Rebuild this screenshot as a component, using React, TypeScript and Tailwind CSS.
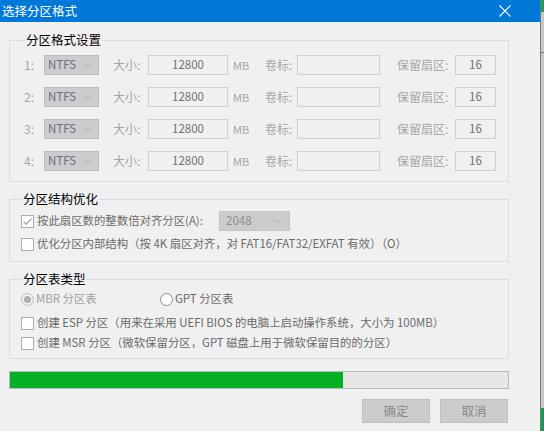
import React from "react";

const FONT = { fontFamily: '"Noto Sans CJK SC", "Noto Sans", sans-serif' };

function Chevron({ color = "#a8a8a8" }: { color?: string }) {
  return (
    <svg width="9" height="6" viewBox="0 0 9 6" className="shrink-0">
      <path d="M0.5 0.8 L4.5 4.8 L8.5 0.8" fill="none" stroke={color} strokeWidth="1" />
    </svg>
  );
}

function Combo({ value, w }: { value: string; w: string }) {
  return (
    <div className={`${w} h-[20px] bg-[#cccccc] border border-[#bdbdbd] flex items-center justify-between pl-[3px] pr-[6px] shrink-0`}>
      <span className="text-[11.5px] text-[#6e6e80] leading-none">{value}</span>
      <Chevron />
    </div>
  );
}

function Field({ value, w }: { value: string; w: string }) {
  return (
    <div className={`${w} h-[20px] bg-[#f0f0f0] border border-[#cfcfcf] flex items-center justify-center shrink-0`}>
      <span className="text-[11.5px] text-[#6e6e6e] leading-none">{value}</span>
    </div>
  );
}

function Row({ n }: { n: number }) {
  return (
    <div className="flex items-center h-[20px] text-[12px] text-[#a6a6a6]">
      <span className="w-[20px] shrink-0">{n}:</span>
      <Combo value="NTFS" w="w-[55px]" />
      <span className="ml-[14px] w-[35px] shrink-0">大小:</span>
      <Field value="12800" w="w-[80px]" />
      <span className="ml-[5px] w-[32px] shrink-0 text-[11px]">MB</span>
      <span className="w-[32px] shrink-0">卷标:</span>
      <Field value="" w="w-[83px]" />
      <span className="ml-[17px] w-[58px] shrink-0">保留扇区:</span>
      <Field value="16" w="w-[41px]" />
    </div>
  );
}

function CheckBox({ checked }: { checked?: boolean }) {
  return (
    <div className="w-[13px] h-[13px] border border-[#adadad] bg-white flex items-center justify-center shrink-0">
      {checked && (
        <svg width="11" height="11" viewBox="0 0 11 11">
          <path d="M1.5 5.5 L4.2 8.2 L9.5 2.5" fill="none" stroke="#a8a8a8" strokeWidth="1.3" />
        </svg>
      )}
    </div>
  );
}

function Radio({ checked }: { checked?: boolean }) {
  return (
    <div
      className={`w-[13px] h-[13px] rounded-full border flex items-center justify-center shrink-0 ${
        checked ? "border-[#bcbcbc] bg-[#f0f0f0]" : "border-[#8f8f8f] bg-white"
      }`}
    >
      {checked && <div className="w-[7px] h-[7px] rounded-full bg-[#b0b0b0]" />}
    </div>
  );
}

function Group({ title, children, className = "" }: { title: string; children: React.ReactNode; className?: string }) {
  return (
    <fieldset className={`border border-[#dcdcdc] ${className}`}>
      <legend className="ml-[1px] px-[1px] text-[12.5px] leading-[14px] text-[#000000]">{title}</legend>
      {children}
    </fieldset>
  );
}

export default function App() {
  return (
    <div className="w-[544px] h-[431px] flex overflow-hidden" style={FONT}>
      <div className="w-[540px] h-full bg-[#f0f0f0] flex flex-col shrink-0">
        <div className="h-[22px] bg-[#0078d7] flex items-center justify-between pl-[2px] pr-[29px] shrink-0">
          <span className="text-white text-[12.5px] leading-none">选择分区格式</span>
          <svg width="12" height="12" viewBox="0 0 12 12">
            <path d="M0.5 0.5 L11.5 11.5 M11.5 0.5 L0.5 11.5" stroke="white" strokeWidth="1.1" />
          </svg>
        </div>
        <div className="pl-[9px] w-[509px] flex flex-col">
          <Group title="分区格式设置" className="mt-[11px] pt-[8px] pb-[10px] pl-[14px]">
            <div className="flex flex-col gap-[12px]">
              <Row n={1} />
              <Row n={2} />
              <Row n={3} />
              <Row n={4} />
            </div>
          </Group>
          <Group title="分区结构优化" className="mt-[10px] pt-[5px] pb-[10px] pl-[11px]">
            <div className="flex items-center h-[20px]">
              <CheckBox checked />
              <span className="ml-[3px] text-[11.4px] text-[#6a6a6a] w-[182px]">按此扇区数的整数倍对齐分区(A):</span>
              <div className="w-[71px] h-[20px] bg-[#cccccc] border border-[#c4c4c4] flex items-center justify-between pl-[6px] pr-[7px]">
                <span className="text-[11.5px] text-[#8e8e8e] leading-none">2048</span>
                <Chevron color="#b0b0b0" />
              </div>
            </div>
            <div className="flex items-center h-[14px] mt-[6px]">
              <CheckBox />
              <span className="ml-[3px] text-[11.4px] text-[#6a6a6a] whitespace-nowrap">
                优化分区内部结构（按 4K 扇区对齐，对 FAT16/FAT32/EXFAT 有效）（O）
              </span>
            </div>
          </Group>
          <Group title="分区表类型" className="mt-[10px] pt-[6px] pb-[8px] pl-[11px]">
            <div className="flex items-center h-[14px]">
              <Radio checked />
              <span className="ml-[2px] text-[11.4px] text-[#a0a0a0] w-[124px]">MBR 分区表</span>
              <Radio />
              <span className="ml-[2px] text-[11.4px] text-[#6a6a6a]">GPT 分区表</span>
            </div>
            <div className="flex items-center h-[14px] mt-[10px]">
              <CheckBox />
              <span className="ml-[3px] text-[11.4px] text-[#6a6a6a] whitespace-nowrap">
                创建 ESP 分区（用来在采用 UEFI BIOS 的电脑上启动操作系统，大小为 100MB）
              </span>
            </div>
            <div className="flex items-center h-[14px] mt-[6px]">
              <CheckBox />
              <span className="ml-[3px] text-[11.4px] text-[#6a6a6a] whitespace-nowrap">
                创建 MSR 分区（微软保留分区，GPT 磁盘上用于微软保留目的的分区）
              </span>
            </div>
          </Group>
          <div className="mt-[12px] h-[18px] border border-[#bcbcbc] bg-[#e6e6e6] flex">
            <div className="w-[333px] h-full bg-[#06b025]" />
          </div>
          <div className="mt-[10px] flex justify-end gap-[10px] pr-[1px]">
            <div className="w-[68px] h-[24px] bg-[#cccccc] border border-[#bfbfbf] flex items-center justify-center text-[12.5px] text-[#8a8a8a]">确定</div>
            <div className="w-[68px] h-[24px] bg-[#cccccc] border border-[#bfbfbf] flex items-center justify-center text-[12.5px] text-[#8a8a8a]">取消</div>
          </div>
        </div>
      </div>
      <div className="w-[4px] h-full flex shrink-0">
        <div className="w-[1px] h-full bg-[#7a7a7a]" />
        <div className="flex-1 h-full bg-[#c8c8c8] flex flex-col">
          <div className="h-[12px] bg-[#1aa05a]" />
          <div className="h-[40px]" />
          <div className="h-[1px] bg-[#707070]" />
          <div className="flex-1" />
          <div className="h-[23px] bg-[#0f9a5a]" />
        </div>
      </div>
    </div>
  );
}
